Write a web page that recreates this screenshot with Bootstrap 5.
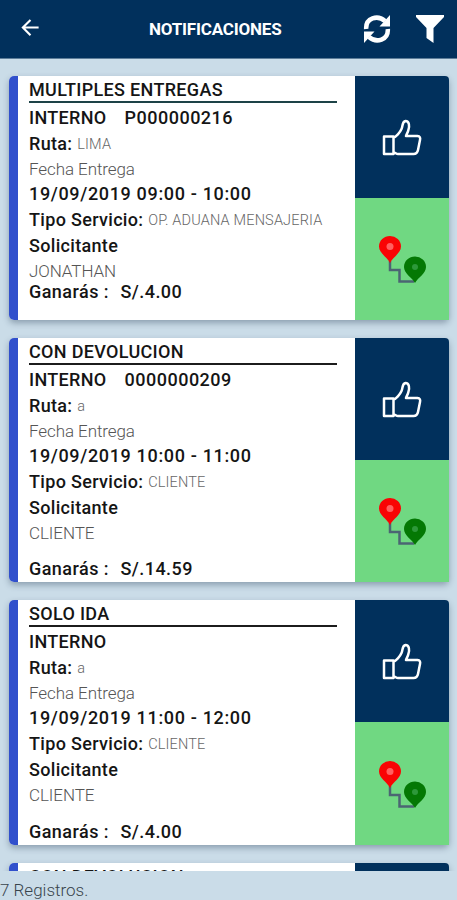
<!DOCTYPE html>
<html lang="es">
<head>
<meta charset="utf-8">
<meta name="viewport" content="width=device-width, initial-scale=1">
<title>Notificaciones</title>
<link href="https://cdn.jsdelivr.net/npm/bootstrap@5.3.0/dist/css/bootstrap.min.css" rel="stylesheet">
<style>
body{font-family:Roboto,"Liberation Sans",sans-serif;background:#cadce8;color:#151515;height:900px}
.topbar{height:59px;background:#01305c;border-bottom:1px solid #5d7d99;padding:0 12px 0 20px}
.topbar h1{font-size:17px;letter-spacing:-.2px;line-height:20px;margin:0 0 0 108px;font-weight:700}
.feed{height:812px;padding:16.5px 8px 0 9px}
.notice{height:244.5px;margin-bottom:17.9px;border-radius:5px;box-shadow:0 3px 6px rgba(40,60,85,.38);background:#fff}
.stripe{width:9px;background:#3150cc;border-radius:5px 0 0 5px}
.info{width:337px;padding-left:11px}
.side{border-radius:0 4px 0 0}
.line{height:26px;line-height:26px;font-size:18px;font-weight:500;white-space:pre;letter-spacing:.32px}
.heading{height:27px;width:308px;border-bottom:2px solid #1c1c1c;line-height:28px;margin-bottom:2px}
.notice-first .heading{border-color:#1d4347}
.when{letter-spacing:.66px;line-height:25px}
.code{margin-left:18px;letter-spacing:.5px}
.soft{font-weight:300;color:#555;font-size:17px;height:24px;line-height:24px;letter-spacing:-.08px}
.tiny{font-weight:300;color:#666;font-size:14.5px;letter-spacing:.17px;vertical-align:1px;line-height:1}
.total{margin-top:14.5px;height:24px;line-height:20px;letter-spacing:.45px}
.total span{margin-left:11.5px}
.notice-first .total{margin-top:-1px}
.accept{height:122px;background:#01305c;padding:2px 1px 0 0}
.route{background:#70d882;padding:2px 1px 0 0}
.footer-bar{height:29px;font-size:17px;font-weight:300;color:#38444c;line-height:38px}
</style>
<script src="https://cdn.jsdelivr.net/npm/bootstrap@5.3.0/dist/js/bootstrap.bundle.min.js"></script>
</head>
<body class="overflow-hidden d-flex flex-column">
<svg class="d-none">
<symbol id="thumb" viewBox="0 0 40 38"><path d="M2 17.500H11.500V35H2ZM11.500 18.500C14 18 18 13.500 19.500 10C21 7 20 2.500 23.500 2C27.500 2 27.500 7 26.500 10.500C26 13.500 24.500 15 24 17H35.500C38 17 38.500 19 38 21L36 31C35.500 33.500 34 35 31.500 35H16C14 35 13.500 33.500 11.500 33.500" fill="none" stroke="#fff" stroke-width="2.500" stroke-linejoin="round"/></symbol>
<symbol id="pins" viewBox="0 0 48 48"><path d="M12 25V34H21.500V45.500H36" fill="none" stroke="#4b6573" stroke-width="2.500"/><path d="M12 27C9 21 1 17 1 10.500A11 10.500 0 0 1 23 10.500C23 17 15 21 12 27Z" fill="#f90404"/><circle cx="12" cy="10.500" r="3.500" fill="#ff6060"/><path d="M37 47C34 41.500 26 37.500 26 31A11 10.500 0 0 1 48 31C48 37.500 40 41.500 37 47Z" fill="#047804"/><circle cx="37" cy="31" r="3" fill="#2d983a"/></symbol>
</svg>
<header class="topbar d-flex align-items-center text-white flex-shrink-0">
<svg width="21" height="20" viewBox="0 0 22 20"><path d="M19.500 8.500H3M11 .5L3 8.500L11 16.500" fill="none" stroke="#fff" stroke-width="2.200"/></svg>
<h1>NOTIFICACIONES</h1>
<svg class="ms-auto" width="28" height="30" viewBox="0 0 28 30"><g fill="none" stroke="#fff" stroke-width="4.500"><path d="M3.200 15C2.500 4 14.500 .5 22 7"/><path d="M24.800 15C25.500 26 13.500 29.500 6 23"/></g><path d="M27 1V12.500H16.500ZM1 29V17.500H11.500Z" fill="#fff"/></svg>
<svg class="ms-4" width="30" height="30" viewBox="0 0 30 30"><path d="M1 1H29V3L18.500 14V29L11.500 24V14L1 3Z" fill="#fff"/></svg>
</header>
<main class="feed overflow-hidden flex-shrink-0">
<article class="notice notice-first d-flex">
<div class="stripe"></div>
<div class="info"><div class="line heading">MULTIPLES ENTREGAS</div><div class="line">INTERNO<span class="code">P000000216</span></div><div class="line">Ruta: <span class="tiny">LIMA</span></div><div class="line soft">Fecha Entrega</div><div class="line when">19/09/2019 09:00 - 10:00</div><div class="line">Tipo Servicio: <span class="tiny">OP. ADUANA MENSAJERIA</span></div><div class="line">Solicitante</div><div class="line soft">JONATHAN</div><div class="line total">Ganarás :<span>S/.4.00</span></div></div>
<div class="side flex-fill d-flex flex-column overflow-hidden"><div class="accept d-flex align-items-center justify-content-center"><svg width="40" height="38"><use href="#thumb"/></svg></div><div class="route flex-fill d-flex align-items-center justify-content-center"><svg width="48" height="48"><use href="#pins"/></svg></div></div>
</article>
<article class="notice d-flex">
<div class="stripe"></div>
<div class="info"><div class="line heading">CON DEVOLUCION</div><div class="line">INTERNO<span class="code">0000000209</span></div><div class="line">Ruta: <span class="tiny">a</span></div><div class="line soft">Fecha Entrega</div><div class="line when">19/09/2019 10:00 - 11:00</div><div class="line">Tipo Servicio: <span class="tiny">CLIENTE</span></div><div class="line">Solicitante</div><div class="line soft">CLIENTE</div><div class="line total">Ganarás :<span>S/.14.59</span></div></div>
<div class="side flex-fill d-flex flex-column overflow-hidden"><div class="accept d-flex align-items-center justify-content-center"><svg width="40" height="38"><use href="#thumb"/></svg></div><div class="route flex-fill d-flex align-items-center justify-content-center"><svg width="48" height="48"><use href="#pins"/></svg></div></div>
</article>
<article class="notice d-flex">
<div class="stripe"></div>
<div class="info"><div class="line heading">SOLO IDA</div><div class="line">INTERNO</div><div class="line">Ruta: <span class="tiny">a</span></div><div class="line soft">Fecha Entrega</div><div class="line when">19/09/2019 11:00 - 12:00</div><div class="line">Tipo Servicio: <span class="tiny">CLIENTE</span></div><div class="line">Solicitante</div><div class="line soft">CLIENTE</div><div class="line total">Ganarás :<span>S/.4.00</span></div></div>
<div class="side flex-fill d-flex flex-column overflow-hidden"><div class="accept d-flex align-items-center justify-content-center"><svg width="40" height="38"><use href="#thumb"/></svg></div><div class="route flex-fill d-flex align-items-center justify-content-center"><svg width="48" height="48"><use href="#pins"/></svg></div></div>
</article>
<article class="notice d-flex">
<div class="stripe"></div>
<div class="info"><div class="line heading">CON DEVOLUCION</div></div>
<div class="side flex-fill d-flex flex-column overflow-hidden"><div class="accept"></div></div>
</article>
</main>
<footer class="footer-bar">7 Registros.</footer>
</body>
</html>
